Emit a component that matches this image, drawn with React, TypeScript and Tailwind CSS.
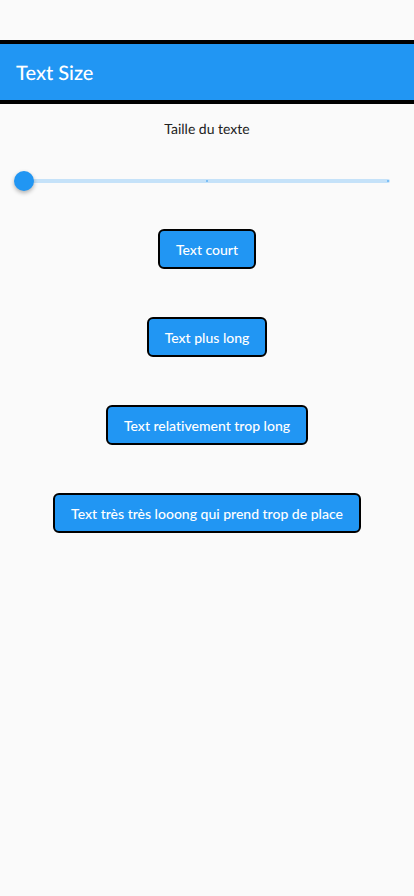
import React, { useState } from "react";

const labels = [
  "Text court",
  "Text plus long",
  "Text relativement trop long",
  "Text très très looong qui prend trop de place",
];

export default function App() {
  const [size, setSize] = useState(0);
  return (
    <div className="min-h-screen bg-[#fafafa] pt-10 font-['Lato',sans-serif] text-[#212121] [font-variant-ligatures:none] [text-rendering:geometricPrecision]">
      <header className="flex h-16 items-center border-y-4 border-black bg-[#2196f3] px-4 pt-0.5">
        <h1 className="text-xl font-medium text-white">Text Size</h1>
      </header>
      <main className="flex flex-col items-center pt-4">
        <label htmlFor="size" className="text-sm leading-4.5">
          Taille du texte
        </label>
        <div className="grid w-full items-center px-3.5 pt-[19px]">
          <div className="col-start-1 row-start-1 mr-2.5 ml-2.5 flex h-1 items-center justify-between rounded-full bg-[#c5e2f9]">
            <span className="size-0.5" />
            <span className="size-0.5 bg-[#7dbff5]" />
            <span className="mr-px size-0.5 bg-[#7dbff5]" />
          </div>
          <input
            id="size"
            type="range"
            min={0}
            max={2}
            step={1}
            value={size}
            onChange={(e) => setSize(Number(e.target.value))}
            className="col-start-1 row-start-1 h-12 w-full appearance-none bg-transparent [&::-webkit-slider-thumb]:size-5 [&::-webkit-slider-thumb]:appearance-none [&::-webkit-slider-thumb]:rounded-full [&::-webkit-slider-thumb]:bg-[#2196f3] [&::-webkit-slider-thumb]:shadow-[0_2px_4px_rgba(0,0,0,0.3)]"
          />
        </div>
        <div className="flex flex-col items-center gap-12 pt-6">
          {labels.map((label) => (
            <button
              key={label}
              type="button"
              className="h-10 rounded-md border-2 border-black bg-[#2196f3] px-4 pt-0.5 text-sm font-medium text-white"
            >
              {label}
            </button>
          ))}
        </div>
      </main>
    </div>
  );
}
